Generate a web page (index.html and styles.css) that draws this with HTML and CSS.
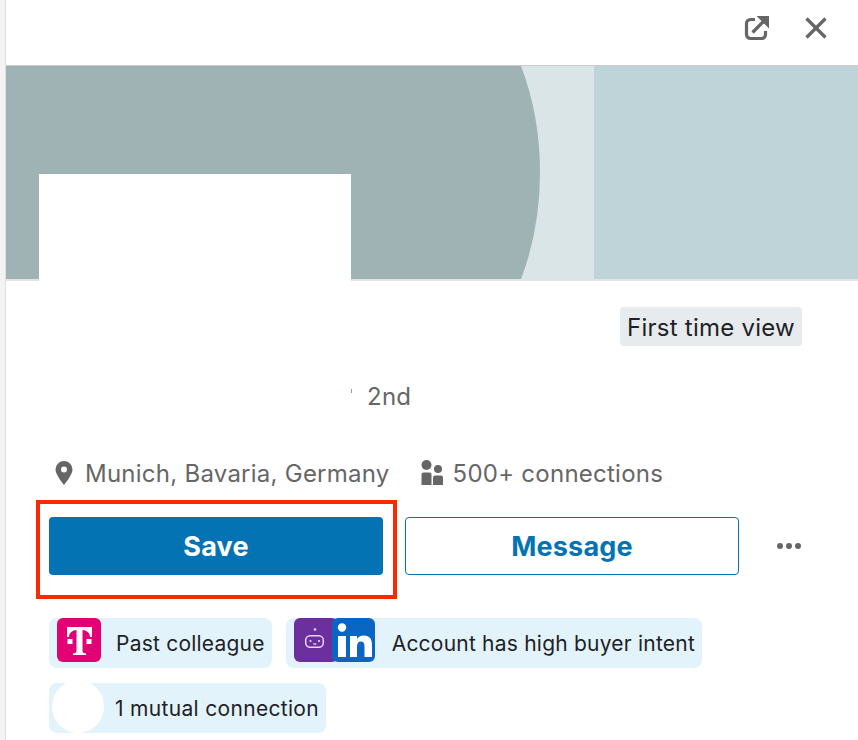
FILE: index.html
```html
<!DOCTYPE html>
<html lang="en">
<head>
<meta charset="utf-8">
<title>Profile preview</title>
<link rel="stylesheet" href="styles.css">
</head>
<body>
<div class="gutter"></div>
<main class="panel">
  <header class="topbar">
    <svg class="icon-open" viewBox="0 0 26 26" aria-hidden="true"><path d="M11 4.500H6.500a4 4 0 0 0-4 4v11a4 4 0 0 0 4 4h11a4 4 0 0 0 4-4V16" fill="none" stroke="#666" stroke-width="3.200"/><path d="M8.500 17.500 20 6" fill="none" stroke="#666" stroke-width="3.200"/><path d="M12.500 1H25v12.500L20.500 9l-4-4z" fill="#666"/></svg>
    <svg class="icon-close" viewBox="0 0 24 24" aria-hidden="true"><path d="M2.500 2.500l19 19M21.500 2.500l-19 19" fill="none" stroke="#666" stroke-width="3.300"/></svg>
  </header>
  <div class="banner">
    <svg class="banner-art" viewBox="0 0 852 214" preserveAspectRatio="none" aria-hidden="true">
      <rect width="852" height="214" fill="#bfd4d8"/>
      <rect x="500" width="88" height="214" fill="#d9e5e7"/>
      <path d="M0 0H515Q534 50 534 107T515 214H0z" fill="#9fb3b4"/>
    </svg>
    <div class="avatar"></div>
  </div>
  <section class="body">
    <div class="badge-row"><span class="badge">First time view</span></div>
    <div class="degree">2nd</div>
    <div class="meta">
      <span class="meta-item">
        <svg class="icon-pin" viewBox="0 0 20 26" aria-hidden="true"><path fill-rule="evenodd" d="M10 1a8.500 8.500 0 0 0-8.500 8.500C1.500 15 10 25 10 25s8.500-10 8.500-15.500A8.500 8.500 0 0 0 10 1zm0 11.500a3 3 0 1 1 0-6 3 3 0 0 1 0 6z" fill="#666"/></svg>
        Munich, Bavaria, Germany
      </span>
      <span class="meta-item">
        <svg class="icon-people" viewBox="0 0 23 26" aria-hidden="true"><circle cx="5.500" cy="5" r="5" fill="#666"/><path d="M.5 14.500a2 2 0 0 1 2-2h6a2 2 0 0 1 2 2V25H.5z" fill="#666"/><circle cx="17" cy="9" r="4" fill="#666"/><path d="M12 17.500a2 2 0 0 1 2-2h6a2 2 0 0 1 2 2V25H12z" fill="#666"/></svg>
        500+ connections
      </span>
    </div>
    <div class="actions">
      <button class="btn btn-primary">Save</button>
      <button class="btn btn-secondary">Message</button>
      <button class="more" aria-label="More"><i></i><i></i><i></i></button>
      <div class="highlight"></div>
    </div>
    <div class="chips">
      <div class="chip">
        <span class="logo logo-t">
          <svg viewBox="0 0 44 44" aria-hidden="true"><path d="M10 9H35V19H33C32.700 15 30.500 12.500 25.500 12V33C25.500 34.800 26.500 35.200 29 35.400V37H16V35.400C18.500 35.200 19.500 34.800 19.500 33V12C14.500 12.500 12.300 15 12 19H10Z" fill="#fff"/><path d="M10.500 21h5v5h-5zM29.500 21h5v5h-5z" fill="#fff"/></svg>
        </span>
        <span class="chip-text">Past colleague</span>
      </div>
      <div class="chip">
        <span class="logo-pair">
          <span class="logo logo-bot">
            <svg viewBox="0 0 44 44" aria-hidden="true"><circle cx="21" cy="11.500" r="1.300" fill="#e9d8f2"/><rect x="11.700" y="17.700" width="17.600" height="11.600" rx="4.500" fill="none" stroke="#e9d8f2" stroke-width="1.500"/><circle cx="16.500" cy="23" r="1.100" fill="#e9d8f2"/><circle cx="25" cy="23" r="1.100" fill="#e9d8f2"/><path d="M19.300 26h3" stroke="#e9d8f2" stroke-width="1.300"/></svg>
          </span>
          <span class="logo logo-in">
            <svg viewBox="0 0 43 44" aria-hidden="true"><circle cx="10" cy="9.500" r="4.200" fill="#fff"/><path d="M6 18h8v21H6zM18 18h7v3c1.300-2.200 3.700-3.600 6.800-3.600 5.800 0 8.200 3.400 8.200 9.500V39h-7.500V28.500c0-3.200-1-5-3.400-5-2.800 0-4.100 1.900-4.100 5V39h-7z" fill="#fff"/></svg>
          </span>
        </span>
        <span class="chip-text">Account has high buyer intent</span>
      </div>
      <div class="chip chip-mutual">
        <span class="mutual-avatar"></span>
        <span class="chip-text chip-text-m">1 mutual connection</span>
      </div>
    </div>
  </section>
</main>
</body>
</html>
```
FILE: styles.css
```css
* { box-sizing: border-box; }
html, body { margin: 0; height: 100%; overflow: hidden; background: #fff; }
body {
  display: flex;
  font-family: Inter, "Liberation Sans", sans-serif;
  font-size: 24px;
  letter-spacing: .25px;
  color: #666;
}
.gutter { width: 6px; flex: none; background: #f3f3f3; border-right: 1px solid #e0e0e0; }
.panel { flex: 1; min-width: 0; }
.topbar {
  height: 66px;
  display: flex;
  align-items: center;
  justify-content: flex-end;
  gap: 34px;
  padding: 0 30px 9px 0;
  border-bottom: 1px solid #ccc;
}
.icon-open { width: 26px; height: 26px; }
.icon-close { width: 24px; height: 24px; }
.banner {
  position: relative;
  height: 215px;
  border-bottom: 2px solid #dfe4e5;
}
.banner-art { display: block; width: 100%; height: 100%; }
.avatar { position: absolute; left: 33px; top: 108px; width: 312px; height: 110px; background: #fff; }
.body { padding: 0 0 0 43px; }
.badge-row { display: flex; justify-content: flex-end; padding: 26px 56px 0 0; }
.badge {
  height: 39px;
  width: 182px;
  display: flex;
  align-items: center;
  justify-content: center;
  padding-top: 1px;
  border-radius: 4px;
  background: #e7ebee;
  color: #1d2226;
  white-space: nowrap;
}
.degree { position: relative; margin: 34px 0 0 318px; line-height: 34px; }
.degree::before { content: ""; position: absolute; left: -16px; top: 9px; width: 1px; height: 4px; background: #7fa6bd; }
.meta { display: flex; align-items: center; gap: 31px; margin: 42px 0 0 5px; height: 34px; }
.meta-item { display: flex; align-items: center; white-space: nowrap; }
.icon-pin { width: 20px; height: 26px; margin-right: 11px; }
.icon-people { width: 23px; height: 26px; margin-right: 9px; }
.actions { position: relative; display: flex; gap: 22px; margin-top: 27px; }
.btn {
  width: 334px;
  height: 58px;
  border-radius: 4px;
  font: 700 27px Inter, "Liberation Sans", sans-serif;
  letter-spacing: .2px;
}
.btn-primary { background: #0373b3; border: 0; color: #fff; }
.btn-secondary { background: #fff; border: 1px solid #0373b3; color: #0373b3; }
.more { display: flex; align-items: center; gap: 3px; margin-left: 16px; border: 0; background: none; padding: 0; }
.more i { width: 6px; height: 6px; border-radius: 50%; background: #666; }
.highlight { position: absolute; left: -13px; top: -17px; width: 361px; height: 99px; border: 4px solid #f82a05; }
.chips { display: flex; flex-wrap: wrap; gap: 15px 14px; margin-top: 43px; width: 700px; }
.chip {
  height: 50px;
  display: flex;
  align-items: flex-start;
  padding-left: 8px;
  border-radius: 8px;
  background: #e3f3fb;
  color: #1d2226;
}
.chip-mutual { padding-left: 3px; }
.chip-text { font-size: 21px; letter-spacing: .22px; line-height: 52px; margin-left: 15px; padding-right: 7px; white-space: nowrap; }
.chip-text-m { margin-left: 11px; letter-spacing: .32px; }
.logo { display: block; width: 44px; height: 44px; border-radius: 6px; }
.logo svg { display: block; width: 100%; height: 100%; }
.logo-t { background: #e20074; }
.logo-pair { display: flex; margin-right: 2px; }
.logo-bot { background: #6b2f9e; }
.logo-in { position: relative; width: 43px; margin-left: -6px; background: #0a66c2; }
.mutual-avatar { width: 52px; height: 53px; margin-top: -3px; border-radius: 50%; background: #fff; flex: none; }
```
